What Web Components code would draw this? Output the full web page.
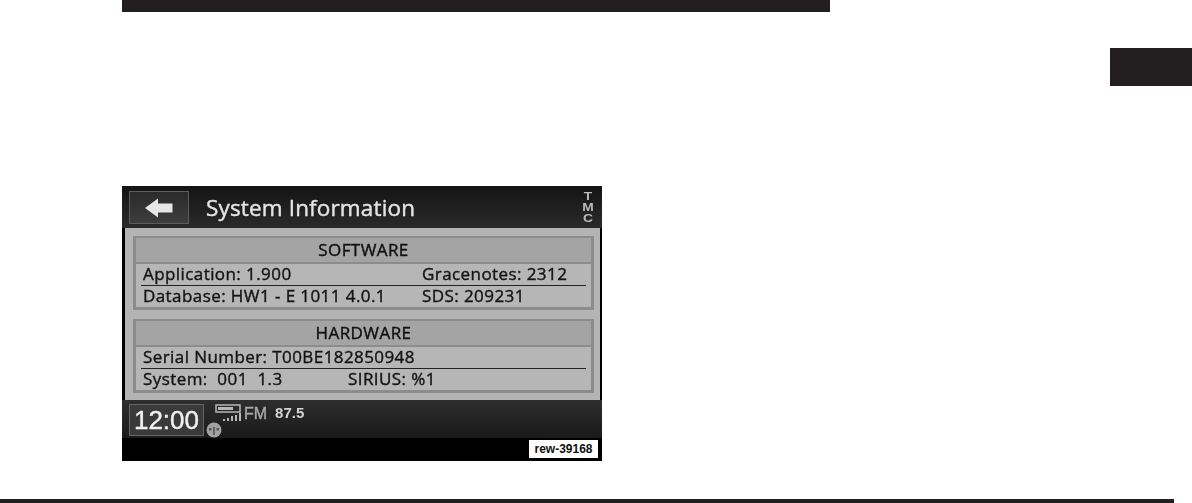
<!DOCTYPE html>
<html>
<head>
<meta charset="utf-8">
<title>System Information</title>
<style>
    html, body { margin: 0; padding: 0; background: #fff; }
    body { width: 1192px; height: 503px; overflow: hidden; }
</style>
</head>
<body>
<manual-page>
    <nav-screen>
        <info-group title="SOFTWARE">
            <info-row slot="first" left="Application: 1.900" right="Gracenotes: 2312" split="279"></info-row>
            <info-row slot="second" left="Database: HW1 - E 1011 4.0.1" right="SDS: 209231" split="279"></info-row>
        </info-group>
        <info-group title="HARDWARE">
            <info-row slot="first" left="Serial Number: T00BE182850948"></info-row>
            <info-row slot="second" left="System:&#160; 001&#160; 1.3" right="SIRIUS: %1" split="205"></info-row>
        </info-group>
    </nav-screen>
</manual-page>

<script>
/**
 * Page du manuel : barre du haut, onglet de chapitre, capture, filet du bas
 */
class ManualPage extends HTMLElement {
    constructor() {
        super();
        const root = this.attachShadow({mode: 'open'});
        root.innerHTML = `
            <style>
                :host {
                    display: grid;
                    grid-template-rows: 12px 36px 38px 100px 275px 38px 4px;
                    grid-template-columns: 122px 708px 280px 82px;
                    width: 1192px;
                    height: 503px;
                }
                .top { grid-row: 1; grid-column: 2; background: #231f20; }
                .tab { grid-row: 3; grid-column: 4; background: #231f20; }
                .shot { grid-row: 5; grid-column: 2; }
                .rule { grid-row: 7; grid-column: 1 / -1; width: 1174px; background: #231f20; }
            </style>
            <div class="top"></div>
            <div class="tab"></div>
            <div class="shot"><slot></slot></div>
            <div class="rule"></div>`;
    }
}

/**
 * Ecran de navigation noir et blanc
 */
class NavScreen extends HTMLElement {
    constructor() {
        super();
        const root = this.attachShadow({mode: 'open'});
        root.innerHTML = `
            <style>
                :host {
                    display: flex;
                    flex-direction: column;
                    width: 480px;
                    height: 275px;
                    background: #000;
                    font-family: "Open Sans", "Liberation Sans", Arial, sans-serif;
                }
                .head {
                    height: 42px;
                    box-sizing: border-box;
                    padding: 5px 5px 4px 7px;
                    display: flex;
                    align-items: center;
                    background: linear-gradient(#141414, #2a2a2a);
                    filter: blur(.35px);
                }
                .back {
                    width: 60px;
                    height: 33px;
                    box-sizing: border-box;
                    border: 1px solid #5c5c5c;
                    background: linear-gradient(#2a2a2a, #3d3d3d);
                    display: flex;
                    align-items: center;
                    justify-content: center;
                }
                h1 {
                    margin: 0 0 0 17px;
                    flex: 1;
                    font-size: 22.5px;
                    font-weight: 400;
                    letter-spacing: .15px;
                    color: #e4e4e4;
                    -webkit-text-stroke: .4px #e4e4e4;
                }
                .tmc {
                    width: 14px;
                    margin-right: 2px;
                    font-family: "Liberation Sans", Arial, sans-serif;
                    font-size: 11.5px;
                    line-height: 11px;
                    font-weight: 700;
                    color: #bcbcbc;
                    text-align: center;
                    transform: scaleX(1.2);
                }
                .panel {
                    height: 172px;
                    box-sizing: border-box;
                    margin: 0 2px 0 3px;
                    padding: 8px 6px 7px 8px;
                    background: #b4b4b4;
                    display: flex;
                    flex-direction: column;
                    gap: 9px;
                    filter: blur(.35px);
                }
                .foot {
                    height: 38px;
                    box-sizing: border-box;
                    padding: 4px 0 2px 7px;
                    display: flex;
                    background: linear-gradient(#2e2e2e, #191919);
                    filter: blur(.35px);
                }
                .clock {
                    width: 75px;
                    height: 32px;
                    box-sizing: border-box;
                    border: 1px solid #666;
                    background: #3a3a3a;
                    color: #f0f0f0;
                    font-family: "Liberation Sans", Arial, sans-serif;
                    font-size: 26px;
                    line-height: 30px;
                    text-align: center;
                    -webkit-text-stroke: .4px #f0f0f0;
                }
                .status {
                    position: relative;
                    flex: 1;
                    display: flex;
                    align-items: flex-start;
                    padding: 0 0 0 11px;
                }
                .fm {
                    margin: 1px 0 0 2px;
                    color: #a8a8a8;
                    font-family: "Liberation Sans", Arial, sans-serif;
                    font-size: 16px;
                    line-height: 17px;
                    -webkit-text-stroke: .4px #a8a8a8;
                }
                .freq {
                    margin: 1px 0 0 8px;
                    color: #d4d4d4;
                    font-family: "Liberation Sans", Arial, sans-serif;
                    font-size: 15px;
                    font-weight: 700;
                    line-height: 16px;
                }
                .disc { position: absolute; left: 2px; top: 18px; }
                .bottom {
                    height: 23px;
                    box-sizing: border-box;
                    padding: 2px 4px 3px 0;
                    display: flex;
                    justify-content: flex-end;
                }
                .code {
                    width: 69px;
                    background: #fff;
                    color: #111;
                    font-family: "Liberation Sans", Arial, sans-serif;
                    font-size: 12px;
                    font-weight: 700;
                    line-height: 18px;
                    text-align: center;
                }
            </style>
            <div class="head">
                <div class="back">
                    <svg width="28" height="20" viewBox="0 0 28 20">
                        <path fill="#e6e6e6" d="M0 10 L13 .5 V5.5 H27.5 V14.5 H13 V19.5 Z"/>
                    </svg>
                </div>
                <h1>System Information</h1>
                <div class="tmc">T<br>M<br>C</div>
            </div>
            <div class="panel"><slot></slot></div>
            <div class="foot">
                <div class="clock">12:00</div>
                <div class="status">
                    <svg width="27" height="18" viewBox="0 0 27 18">
                        <rect x="1" y="1" width="24" height="7" fill="none" stroke="#b8b8b8" stroke-width="1.5"/>
                        <rect x="3" y="3" width="15" height="3" fill="#b8b8b8"/>
                        <path fill="#b8b8b8" d="M8 15h2v2H8zM12 14h2v3h-2zM16 12h2v5h-2zM20 11h2v6h-2zM24 9h2v8h-2z"/>
                    </svg>
                    <span class="fm">FM</span>
                    <span class="freq">87.5</span>
                    <svg class="disc" width="16" height="16" viewBox="0 0 16 16">
                        <circle cx="8" cy="8" r="7.5" fill="#a2a2a2"/>
                        <path fill="#555" d="M7.2 5h1.6v8H7.2zM3 6h2.5v2.5H3zM10.5 6H13v2.5h-2.5z"/>
                    </svg>
                </div>
            </div>
            <div class="bottom"><div class="code">rew-39168</div></div>`;
    }
}

/**
 * Groupe d'infos : titre et deux lignes separees par un filet
 */
class InfoGroup extends HTMLElement {
    constructor() {
        super();
        const title = this.getAttribute('title') || '';
        const root = this.attachShadow({mode: 'open'});
        root.innerHTML = `
            <style>
                :host {
                    display: block;
                    height: 74px;
                    box-sizing: border-box;
                    border: 3px solid #8c8c8c;
                    border-top-width: 2px;
                    background: #b6b6b6;
                }
                .title {
                    height: 24px;
                    border-bottom: 2px solid #8c8c8c;
                    background: #a4a4a4;
                    color: #111;
                    font-size: 17px;
                    letter-spacing: .42px;
                    line-height: 24px;
                    text-align: center;
                    -webkit-text-stroke: .4px #111;
                }
                .line { height: 1px; margin: 0 5px 0 5px; background: #222; }
            </style>
            <div class="title">${title}</div>
            <slot name="first"></slot>
            <div class="line"></div>
            <slot name="second"></slot>`;
    }
}

/**
 * Ligne de texte, avec une deuxieme colonne optionnelle
 */
class InfoRow extends HTMLElement {
    constructor() {
        super();
        const left = this.getAttribute('left') || '';
        const right = this.getAttribute('right') || '';
        const split = this.getAttribute('split') || '0';
        const root = this.attachShadow({mode: 'open'});
        root.innerHTML = `
            <style>
                :host {
                    display: flex;
                    height: 21px;
                    padding-left: 7px;
                    color: #151515;
                    font-size: 17px;
                    letter-spacing: .42px;
                    line-height: 20px;
                    white-space: pre;
                    -webkit-text-stroke: .4px #151515;
                }
                .left { width: ${split}px; }
            </style>
            <span class="left">${left}</span><span>${right}</span>`;
    }
}

try {
    customElements.define('manual-page', ManualPage);
    customElements.define('nav-screen', NavScreen);
    customElements.define('info-group', InfoGroup);
    customElements.define('info-row', InfoRow);
} catch (e) {
    if (e instanceof DOMException) {
        console.error('DOMException : ', e);
    } else {
        throw e;
    }
}
</script>
</body>
</html>
